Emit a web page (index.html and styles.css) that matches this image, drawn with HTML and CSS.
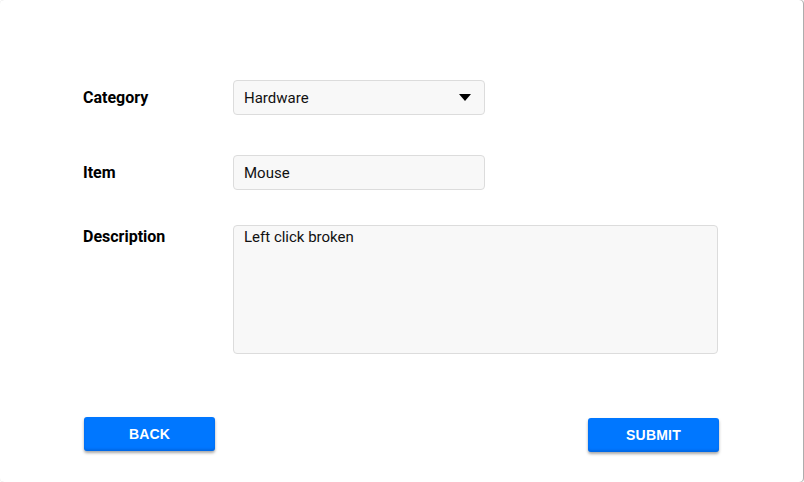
FILE: index.html
```html
<!DOCTYPE html>
<html>
<head>
<meta charset="utf-8">
<link rel="stylesheet" href="styles.css">
</head>
<body>
<div class="card">
  <form class="form">
    <div class="row row-cat">
      <label class="label">Category</label>
      <div class="field select">
        <span>Hardware</span>
        <svg class="caret" width="12" height="8" viewBox="0 0 12 8"><path d="M0 0H12L6 7Z" fill="#000"/></svg>
      </div>
    </div>
    <div class="row row-item">
      <label class="label">Item</label>
      <div class="field input">Mouse</div>
    </div>
    <div class="row row-desc">
      <label class="label label-top">Description</label>
      <div class="field textarea">Left click broken</div>
    </div>
    <div class="actions">
      <button type="button" class="btn">BACK</button>
      <button type="button" class="btn btn-submit">SUBMIT</button>
    </div>
  </form>
</div>
</body>
</html>
```
FILE: styles.css
```css
html, body {
  margin: 0;
  padding: 0;
  background: #fff;
}
body {
  font-family: Roboto, "Liberation Sans", Arial, sans-serif;
  color: #111;
}
.card {
  box-sizing: border-box;
  width: 803px;
  height: 482px;
  border-radius: 4px;
  box-shadow: 1px 0 1px rgba(0,0,0,0.35), 0 0 1px rgba(0,0,0,0.12);
  background: #fff;
  padding: 80px 0 0 83px;
}
.form {
  width: 636px;
  display: flex;
  flex-direction: column;
}
.row {
  display: flex;
  align-items: center;
}
.row-item { margin-top: 40px; }
.row-desc { margin-top: 35px; align-items: flex-start; }
.label {
  width: 150px;
  font-weight: 700;
  font-size: 16px;
  color: #000;
}
.label-top { padding-top: 2px; }
.field {
  box-sizing: border-box;
  background: #f8f8f8;
  border: 1px solid #dcdcdc;
  border-radius: 4px;
  font-size: 15px;
  color: #111;
  padding: 0 10px;
}
.select, .input {
  width: 252px;
  height: 35px;
  display: flex;
  align-items: center;
}
.select { justify-content: space-between; padding-right: 13px; }
.caret { display: block; }
.textarea {
  width: 485px;
  height: 129px;
  padding-top: 2px;
  line-height: 18px;
}
.actions {
  margin-top: 63px;
  display: flex;
  justify-content: space-between;
  align-items: flex-start;
}
.btn {
  width: 131px;
  height: 34px;
  margin-left: 1px;
  border: none;
  border-radius: 3px;
  background: #0077ff;
  color: #fff;
  font-family: "Liberation Sans", Arial, sans-serif;
  font-weight: 700;
  font-size: 14px;
  letter-spacing: 0.2px;
  box-shadow: 0 2px 3px rgba(0,0,0,0.35), inset 0 -2px 2px rgba(0,60,160,0.25);
  padding: 0;
}
.btn-submit { margin-top: 1px; margin-left: 0; }
```
